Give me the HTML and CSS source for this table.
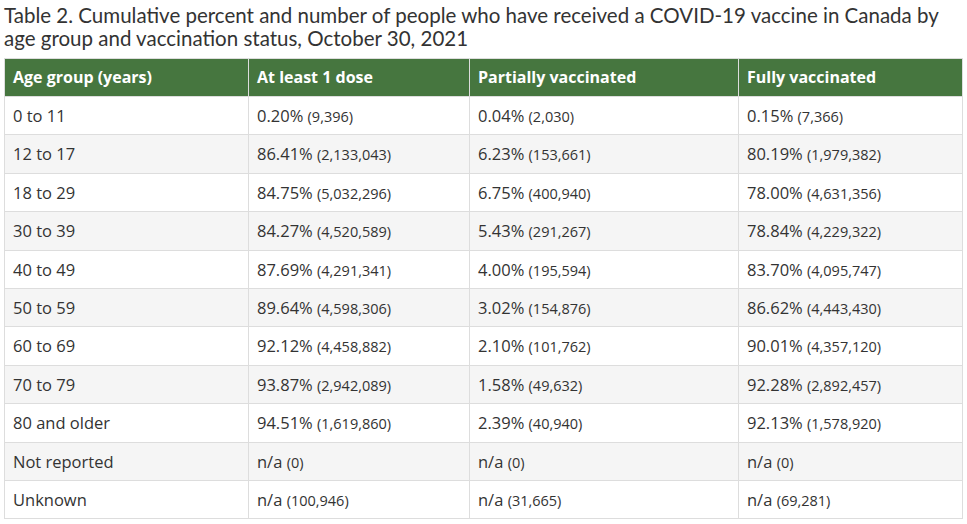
FILE: index.html
```html
<!DOCTYPE html>
<html lang="en">
<head>
<meta charset="utf-8">
<link rel="stylesheet" href="styles.css">
</head>
<body>
<table class="vax">
<caption class="vax-caption">Table 2. Cumulative percent and number of people who have received a COVID-19 vaccine in Canada by age group and vaccination status, October 30, 2021</caption>
<colgroup>
<col class="c1"><col class="c2"><col class="c3"><col class="c4">
</colgroup>
<thead>
<tr><th>Age group (years)</th><th>At least 1 dose</th><th>Partially vaccinated</th><th>Fully vaccinated</th></tr>
</thead>
<tbody>
<tr><td>0 to 11</td><td>0.20% <span class="n">(9,396)</span></td><td>0.04% <span class="n">(2,030)</span></td><td>0.15% <span class="n">(7,366)</span></td></tr>
<tr><td>12 to 17</td><td>86.41% <span class="n">(2,133,043)</span></td><td>6.23% <span class="n">(153,661)</span></td><td>80.19% <span class="n">(1,979,382)</span></td></tr>
<tr><td>18 to 29</td><td>84.75% <span class="n">(5,032,296)</span></td><td>6.75% <span class="n">(400,940)</span></td><td>78.00% <span class="n">(4,631,356)</span></td></tr>
<tr><td>30 to 39</td><td>84.27% <span class="n">(4,520,589)</span></td><td>5.43% <span class="n">(291,267)</span></td><td>78.84% <span class="n">(4,229,322)</span></td></tr>
<tr><td>40 to 49</td><td>87.69% <span class="n">(4,291,341)</span></td><td>4.00% <span class="n">(195,594)</span></td><td>83.70% <span class="n">(4,095,747)</span></td></tr>
<tr><td>50 to 59</td><td>89.64% <span class="n">(4,598,306)</span></td><td>3.02% <span class="n">(154,876)</span></td><td>86.62% <span class="n">(4,443,430)</span></td></tr>
<tr><td>60 to 69</td><td>92.12% <span class="n">(4,458,882)</span></td><td>2.10% <span class="n">(101,762)</span></td><td>90.01% <span class="n">(4,357,120)</span></td></tr>
<tr><td>70 to 79</td><td>93.87% <span class="n">(2,942,089)</span></td><td>1.58% <span class="n">(49,632)</span></td><td>92.28% <span class="n">(2,892,457)</span></td></tr>
<tr><td>80 and older</td><td>94.51% <span class="n">(1,619,860)</span></td><td>2.39% <span class="n">(40,940)</span></td><td>92.13% <span class="n">(1,578,920)</span></td></tr>
<tr><td>Not reported</td><td>n/a <span class="n">(0)</span></td><td>n/a <span class="n">(0)</span></td><td>n/a <span class="n">(0)</span></td></tr>
<tr><td>Unknown</td><td>n/a <span class="n">(100,946)</span></td><td>n/a <span class="n">(31,665)</span></td><td>n/a <span class="n">(69,281)</span></td></tr>
</tbody>
</table>
</body>
</html>
```
FILE: styles.css
```css
html, body {
  margin: 0;
  background: #fff;
}
body {
  padding: 0 4px;
  font-family: "Open Sans", "Noto Sans", sans-serif;
  color: #333;
}
.vax {
  width: 958px;
  border-collapse: collapse;
  table-layout: fixed;
}
.c1 { width: 244px; }
.c2 { width: 221px; }
.c3 { width: 269px; }
.c4 { width: 224px; }
.vax-caption {
  caption-side: top;
  text-align: left;
  font-family: Lato, "Liberation Sans", sans-serif;
  font-size: 20.5px;
  line-height: 23px;
  color: #333;
  padding: 4px 0 8px;
}
.vax th,
.vax td {
  border: 1px solid #ddd;
  padding: 8px 8px;
  text-align: left;
  vertical-align: middle;
}
.vax th {
  background: #46763f;
  color: #fff;
  font-family: "Open Sans", "Noto Sans", sans-serif;
  font-weight: 700;
  font-size: 16px;
  line-height: 21px;
}
.vax td {
  height: 37.4px;
  box-sizing: border-box;
  font-size: 16.5px;
  line-height: 21.4px;
}
.vax tbody tr:nth-child(even) td {
  background: #f5f5f5;
}
.n {
  font-size: 14.5px;
  line-height: 1;
}
```
